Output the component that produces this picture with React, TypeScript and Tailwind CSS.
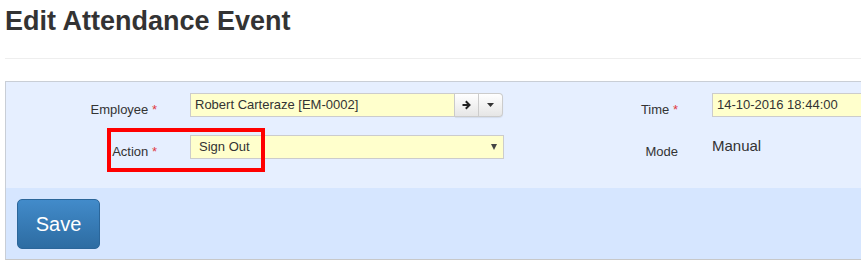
import React from "react";

export default function App() {
  return (
    <div
      className="w-[861px] h-[261px] overflow-hidden bg-white text-[#333]"
      style={{ fontFamily: '"Liberation Sans", Arial, sans-serif' }}
    >
      <div className="pl-[5px] pt-[6px] text-[27px] leading-[30px] font-bold text-[#333]">
        Edit Attendance Event
      </div>
      <div className="ml-[5px] mt-[22px] h-px bg-[#eeeeee]" />
      <div className="ml-[5px] mt-[22px] w-[900px] border border-[#c9ced6] border-b-[#c8c8c8]">
        <div className="relative bg-[#e6efff] pt-[11px] h-[106px] flex">
          {/* left column */}
          <div className="w-[498px] flex flex-col gap-[18px]">
            <div className="flex items-start">
              <div className="w-[151px] text-right text-[13px] leading-[15px] pt-[9px]">
                Employee <span className="text-[#e0393e]">*</span>
              </div>
              <div className="ml-[33px] flex h-[24px]">
                <div className="w-[265px] h-[24px] border border-[#cccccc] bg-[#ffffcc] pl-[4px] text-[13px] leading-[22px] text-[#333]">
                  Robert Carteraze [EM-0002]
                </div>
                <div className="flex h-[24px] rounded-r-[4px] border border-l-0 border-[#cccccc] bg-gradient-to-b from-white to-[#e6e6e6] shadow-[0_1px_1px_rgba(0,0,0,0.08)]">
                  <div className="w-[24px] flex items-center justify-center border-r border-[#cccccc]">
                    <svg width="9" height="10" viewBox="0 0 9 10">
                      <path d="M0.5 5 H7 M3.8 1.3 L7.5 5 L3.8 8.7" stroke="#222" strokeWidth="2" fill="none" />
                    </svg>
                  </div>
                  <div className="w-[23px] flex items-center justify-center">
                    <svg width="7" height="4" viewBox="0 0 7 4">
                      <path d="M0 0 H7 L3.5 4 Z" fill="#333" />
                    </svg>
                  </div>
                </div>
              </div>
            </div>
            <div className="flex items-start">
              <div className="w-[151px] text-right text-[13px] leading-[15px] pt-[9px]">
                Action <span className="text-[#e0393e]">*</span>
              </div>
              <div className="ml-[33px] relative w-[314px] h-[24px] border border-[#cccccc] bg-[#ffffcc] pl-[8px] text-[13px] leading-[22px] text-[#333]">
                Sign Out
                <svg className="absolute right-[6px] top-[8px]" width="6" height="6" viewBox="0 0 6 6">
                  <path d="M0 0 H6 L3 6 Z" fill="#444" />
                </svg>
              </div>
            </div>
          </div>
          {/* right column */}
          <div className="flex flex-col gap-[18px]">
            <div className="flex items-start">
              <div className="w-[174px] text-right text-[13px] leading-[15px] pt-[9px]">
                Time <span className="text-[#e0393e]">*</span>
              </div>
              <div className="ml-[34px] w-[170px] h-[24px] border border-[#cccccc] bg-[#ffffcc] pl-[4px] text-[13px] leading-[22px] text-[#333]">
                14-10-2016 18:44:00
              </div>
            </div>
            <div className="flex items-start">
              <div className="w-[174px] text-right text-[13px] leading-[15px] pt-[9px]">Mode</div>
              <div className="ml-[34px] text-[15px] leading-[18px] pt-[2px] text-[#333]">Manual</div>
            </div>
          </div>
          {/* annotation box */}
          <div className="absolute left-[101px] top-[46px] w-[158px] h-[44px] border-[4px] border-[#ff0000]" />
        </div>
        <div className="bg-[#d6e6ff] h-[71px] pt-[11px] pl-[11px]">
          <div className="w-[83px] h-[50px] rounded-[5px] border border-[#2b669a] bg-gradient-to-b from-[#428bca] to-[#2d6ca2] text-white text-[20px] flex items-center justify-center">
            Save
          </div>
        </div>
      </div>
    </div>
  );
}
